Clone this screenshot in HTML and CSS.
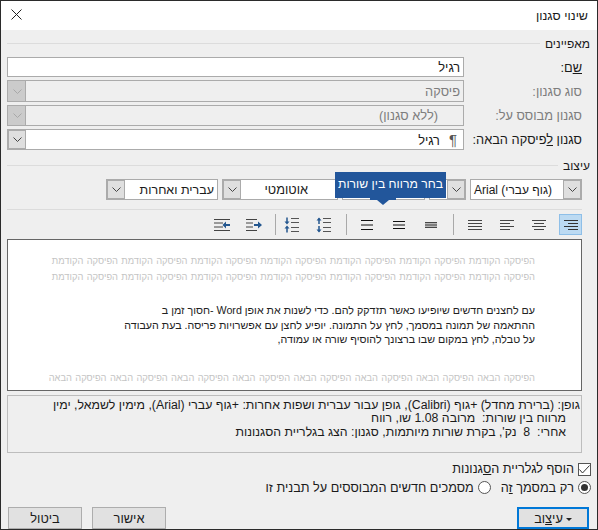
FILE: index.html
```html
<!DOCTYPE html>
<html lang="he" dir="rtl">
<head>
    <meta charset="UTF-8">
    <title>שינוי סגנון</title>
    <link rel="stylesheet" href="styles.css">
</head>
<body>

    <div class="dialog">
        <div class="titlebar">
            <span class="title">שינוי סגנון</span>
            <svg class="close" width="11" height="11" viewBox="0 0 11 11"><path d="M.5.5l10 10M10.500.5l-10 10" stroke="#222" stroke-width="1" fill="none"/></svg>
        </div>

        <div class="content">
            <!-- Properties -->
            <div class="legend legend-first"><span>מאפיינים</span><i></i></div>
            <div class="form-row row-name">
                <label><u>ש</u>ם:</label>
                <div class="field">רגיל</div>
            </div>
            <div class="form-row row-type">
                <label class="muted">סוג סגנון:</label>
                <div class="field disabled"><span class="field-text">פיסקה</span><span class="arrow"><svg width="9" height="5" viewBox="0 0 9 5"><path d="M.5.5l4 4 4-4" stroke="#a8a8a8" fill="none"/></svg></span></div>
            </div>
            <div class="form-row row-based">
                <label class="muted">סגנון מבוסס על:</label>
                <div class="field disabled"><span class="field-text based">(ללא סגנון)</span><span class="arrow"><svg width="9" height="5" viewBox="0 0 9 5"><path d="M.5.5l4 4 4-4" stroke="#a8a8a8" fill="none"/></svg></span></div>
            </div>
            <div class="form-row row-next">
                <label>סגנון <u>ל</u>פיסקה הבאה:</label>
                <div class="field combo"><span class="field-text"><span class="pilcrow">¶</span>רגיל</span><span class="arrow"><svg width="9" height="5" viewBox="0 0 9 5"><path d="M.5.5l4 4 4-4" stroke="#444" fill="none"/></svg></span></div>
            </div>

            <!-- Formatting -->
            <div class="legend legend-format"><span>עיצוב</span><i></i></div>
            <div class="font-row">
                <div class="select font-name"><span class="field-text" dir="ltr">Arial (גוף עברי)</span><span class="arrow"><svg width="9" height="5" viewBox="0 0 9 5"><path d="M.5.5l4 4 4-4" stroke="#444" fill="none"/></svg></span></div>
                <div class="select font-small"><span class="field-text"></span><span class="arrow"><svg width="9" height="5" viewBox="0 0 9 5"><path d="M.5.5l4 4 4-4" stroke="#444" fill="none"/></svg></span></div>
                <div class="select font-size"></div>
                <div class="select font-color"><span class="field-text">אוטומטי</span><span class="arrow"><svg width="9" height="5" viewBox="0 0 9 5"><path d="M.5.5l4 4 4-4" stroke="#444" fill="none"/></svg></span></div>
                <div class="select font-lang"><span class="field-text">עברית ואחרות</span><span class="arrow"><svg width="9" height="5" viewBox="0 0 9 5"><path d="M.5.5l4 4 4-4" stroke="#444" fill="none"/></svg></span></div>
                <div class="tooltip">בחר מרווח בין שורות</div>
            </div>

            <div class="toolbar">
                <span class="tool active"><svg width="14" height="10" viewBox="0 0 14 10"><path d="M0 .5h14M4 3.500h10M0 6.500h14M4 9.500h10" stroke="#333"/></svg></span>
                <span class="tool"><svg width="14" height="10" viewBox="0 0 14 10"><path d="M0 .5h14M2 3.500h10M0 6.500h14M2 9.500h10" stroke="#444"/></svg></span>
                <span class="tool"><svg width="14" height="10" viewBox="0 0 14 10"><path d="M0 .5h14M0 3.500h10M0 6.500h14M0 9.500h10" stroke="#444"/></svg></span>
                <span class="tool"><svg width="14" height="10" viewBox="0 0 14 10"><path d="M0 .5h14M0 3.500h14M0 6.500h14M0 9.500h14" stroke="#444"/></svg></span>
                <i class="sep"></i>
                <span class="tool"><svg width="12" height="6" viewBox="0 0 12 6"><path d="M0 .8h12M0 3h12M0 5.200h12" stroke="#111" stroke-width="1.100"/></svg></span>
                <span class="tool"><svg width="12" height="8" viewBox="0 0 12 8"><path d="M0 .5h12M0 4h12M0 7.500h12" stroke="#111"/></svg></span>
                <span class="tool"><svg width="12" height="10" viewBox="0 0 12 10"><path d="M0 .5h12M0 5h12M0 9.500h12" stroke="#111"/></svg></span>
                <i class="sep"></i>
                <span class="tool"><svg width="15" height="16" viewBox="0 0 15 16"><path d="M3 1.500v5.500M3 9v5.500" stroke="#24578f" stroke-width="1.500" fill="none"/><path d="M.5 3.500L3 .5l2.500 3zM.5 12.500L3 15.500l2.500-3z" fill="#24578f"/><path d="M7 1.500h8M7 5.500h8M7 10.500h8M7 14.500h8" stroke="#555"/></svg></span>
                <span class="tool"><svg width="15" height="16" viewBox="0 0 15 16"><path d="M3 .5v5M3 10.500v5" stroke="#24578f" stroke-width="1.500" fill="none"/><path d="M.5 4.500L3 7.500l2.500-3zM.5 11.500L3 8.500l2.500 3z" fill="#24578f"/><path d="M7 1.500h8M7 5.500h8M7 10.500h8M7 14.500h8" stroke="#555"/></svg></span>
                <i class="sep sep-tight"></i>
                <span class="tool"><svg width="16" height="12" viewBox="0 0 16 12"><path d="M0 .5h11M0 4h7M0 8h7M0 11.500h11" stroke="#444"/><path d="M8 5h4V2.500L16 6l-4 3.500V7H8z" fill="#24578f"/></svg></span>
                <span class="tool"><svg width="16" height="12" viewBox="0 0 16 12"><path d="M0 .5h16M0 4h9M0 8h9M0 11.500h16" stroke="#444"/><path d="M16 5h-4V2.500L8.500 6l3.500 3.500V7h4z" fill="#24578f"/></svg></span>
            </div>

            <!-- Preview -->
            <div class="preview">
                <p class="ghost ghost-first">הפיסקה הקודמת הפיסקה הקודמת הפיסקה הקודמת הפיסקה הקודמת הפיסקה הקודמת הפיסקה הקודמת הפיסקה הקודמת</p>
                <p class="ghost">הפיסקה הקודמת הפיסקה הקודמת הפיסקה הקודמת הפיסקה הקודמת הפיסקה הקודמת הפיסקה הקודמת הפיסקה הקודמת</p>
                <p class="sample sample-first">עם לחצנים חדשים שיופיעו כאשר תזדקק להם. כדי לשנות את אופן Word -חסוך זמן ב</p>
                <p class="sample">ההתאמה של תמונה במסמך, לחץ על התמונה. יופיע לחצן עם אפשרויות פריסה. בעת העבודה</p>
                <p class="sample">על טבלה, לחץ במקום שבו ברצונך להוסיף שורה או עמודה,</p>
                <p class="ghost ghost-next">הפיסקה הבאה הפיסקה הבאה הפיסקה הבאה הפיסקה הבאה הפיסקה הבאה הפיסקה הבאה הפיסקה הבאה הפיסקה הבאה</p>
            </div>

            <!-- Description -->
            <div class="description">
                <p>גופן: (ברירת מחדל) +גוף (Calibri), גופן עבור עברית ושפות אחרות: +גוף עברי (Arial), מימין לשמאל, ימין</p>
                <p class="indent">מרווח בין שורות:&nbsp; מרובה 1.08 שו, רווח</p>
                <p class="indent">אחרי:&nbsp; 8&nbsp; נק', בקרת שורות מיותמות, סגנון: הצג בגלריית הסגנונות</p>
            </div>

            <div class="check-row">
                <span class="checkbox"><svg width="11" height="9" viewBox="0 0 11 9"><path d="M.5 4.500l3 3.500L10.500.5" stroke="#333" fill="none"/></svg></span>
                <span>הוסף לגלריית ה<u>ס</u>גנונות</span>
            </div>
            <div class="radio-row">
                <span class="radio-item"><span class="radio checked"></span><span>רק במסמך <u>ז</u>ה</span></span>
                <span class="radio-item"><span class="radio"></span><span>מסמכים חדשים המבוססים על תבנית זו</span></span>
            </div>

            <div class="buttons">
                <button class="btn btn-format"><span class="caret"></span>עי<u>צ</u>וב</button>
                <div class="btn-group">
                    <button class="btn">אישור</button>
                    <button class="btn">ביטול</button>
                </div>
            </div>
        </div>
    </div>

</body>
</html>
```

FILE: styles.css
```css
* {
    box-sizing: border-box;
}

html, body {
    margin: 0;
    padding: 0;
}

body {
    font-family: "Liberation Sans", Arial, sans-serif;
    font-size: 12px;
    color: #1a1a1a;
    background: #efefef;
}

p {
    margin: 0;
}

.dialog {
    width: 598px;
    height: 530px;
    border: 1px solid #2b2b2b;
    background: #efefef;
    overflow: hidden;
}

.titlebar {
    height: 29px;
    background: #fff;
    display: flex;
    justify-content: space-between;
    align-items: center;
    padding: 0 9px 1px 10px;
}

.title {
    font-size: 12.500px;
    margin-top: 1px;
}

.close {
    margin-top: -2px;
}

.content {
    padding: 0 15px;
}

/* Section headers */
.legend {
    display: flex;
    align-items: center;
    gap: 5px;
    height: 14px;
    margin-right: -8px;
    margin-left: -9px;
    font-size: 12px;
}

.legend i {
    flex: 1;
    height: 1px;
    background: #dcdcdc;
    margin-top: -2px;
}

.legend-first {
    margin-top: 7px;
}

.legend-format {
    margin-top: 9px;
}

/* Form rows */
.form-row {
    display: flex;
    align-items: center;
    margin-left: -9px;
}

.form-row label {
    width: 118px;
    flex: none;
    font-size: 12.800px;
}

.form-row .field {
    flex: 1;
}

.muted {
    color: #7d7d7d;
}

.row-name {
    margin-top: 6px;
    height: 20px;
}

.row-type {
    margin-top: 3px;
    height: 22px;
}

.row-based, .row-next {
    margin-top: 3px;
    height: 21px;
}

.field, .select {
    height: 100%;
    border: 1px solid #ababab;
    background: #fff;
    display: flex;
    align-items: center;
    font-size: 12.800px;
}

.row-name .field {
    padding-right: 3px;
}

.field-text {
    flex: 1;
    padding-right: 3px;
    white-space: nowrap;
    overflow: hidden;
}

.based {
    padding-right: 25px;
}

.pilcrow {
    color: #555;
    font-size: 15px;
    margin-left: 9px;
    margin-right: 3px;
}

.disabled {
    background: #efefef;
    color: #7d7d7d;
}

.arrow {
    flex: none;
    width: 18px;
    height: 100%;
    background: #dfdfdf;
    box-shadow: inset 0 0 0 1px #ababab;
    display: flex;
    align-items: center;
    justify-content: center;
}

.disabled .arrow {
    background: #cbcbcb;
    box-shadow: inset -1px 0 0 #ababab;
}

/* Font selectors */
.font-row {
    position: relative;
    display: flex;
    gap: 4px;
    height: 21px;
    margin-top: 6px;
    margin-left: 90px;
}

.font-name {
    width: 112px;
    flex-direction: row-reverse;
}

.font-name .field-text {
    text-align: left;
    padding: 0 0 0 3px;
    font-size: 12px;
}

.font-small {
    width: 37px;
    flex-direction: row-reverse;
}

.font-size {
    width: 83px;
}

.font-color {
    width: 116px;
}

.font-color .field-text {
    padding-right: 29px;
}

.font-lang {
    width: 112px;
}

.font-lang .field-text {
    font-size: 12.500px;
}

.tooltip {
    position: absolute;
    top: -7px;
    right: 136px;
    width: 111px;
    height: 26px;
    background: #22569b;
    color: #fff;
    font-size: 12.200px;
    line-height: 25px;
    text-align: center;
    white-space: nowrap;
}

.tooltip::after {
    content: "";
    position: absolute;
    top: 26px;
    left: 35px;
    width: 26px;
    height: 2px;
    background: #22569b;
}

.tooltip::before {
    content: "";
    position: absolute;
    top: 28px;
    left: 42px;
    border-style: solid;
    border-width: 5px 6px 0 6px;
    border-color: #22569b transparent transparent transparent;
}

/* Alignment toolbar */
.toolbar {
    display: flex;
    align-items: center;
    height: 26px;
    margin-top: 9px;
    margin-left: -9px;
    border-top: 1px solid #dcdcdc;
    padding-top: 4px;
    gap: 9px;
}

.tool {
    width: 23px;
    height: 21px;
    flex: none;
    display: flex;
    align-items: center;
    justify-content: center;
}

.tool.active {
    background: #bcdaf2;
    border: 1px solid #8ebfe8;
}

.sep {
    width: 1px;
    height: 21px;
    flex: none;
    background: #a9a9a9;
    margin-left: 1.500px;
}

.sep-tight {
    margin-right: -5px;
    margin-left: 1px;
}

/* Preview */
.preview {
    height: 152px;
    margin-top: 4px;
    margin-left: -9px;
    border: 1px solid #666;
    background: #fff;
    padding: 0 46px;
    overflow: hidden;
}

.ghost {
    color: #c4c4c4;
    white-space: nowrap;
    line-height: 16px;
    font-size: 9.300px;
    word-spacing: .8px;
}

.ghost-first {
    margin-top: 13px;
}

.sample {
    line-height: 14.500px;
    color: #222;
    white-space: nowrap;
    font-size: 10.700px;
}

.sample-first {
    margin-top: 18px;
}

.ghost-next {
    margin-top: 23px;
}

/* Description */
.description {
    height: 58px;
    margin-top: 4px;
    margin-left: -9px;
    border: 1px solid #bdbdbd;
    padding: 3px 1px 0 0;
    font-size: 12.300px;
    line-height: 13.400px;
    white-space: nowrap;
}

.description .indent {
    padding-right: 14px;
}

/* Options */
.check-row, .radio-row {
    display: flex;
    align-items: center;
    gap: 4px;
    font-size: 12.700px;
    margin-right: -9px;
}

.check-row {
    margin-top: 8px;
    height: 16px;
}

.checkbox {
    width: 13px;
    height: 13px;
    border: 1px solid #555;
    background: #fff;
    display: flex;
    align-items: center;
    justify-content: center;
}

.radio-row {
    margin-top: 2px;
    height: 17px;
    gap: 10px;
}

.radio-item {
    display: flex;
    align-items: center;
    gap: 4px;
}

.radio {
    width: 13px;
    height: 13px;
    border: 1px solid #555;
    border-radius: 50%;
    background: #fff;
    position: relative;
}

.radio.checked::after {
    content: "";
    position: absolute;
    top: 2px;
    left: 2px;
    width: 7px;
    height: 7px;
    border-radius: 50%;
    background: #333;
}

/* Buttons */
.buttons {
    display: flex;
    justify-content: space-between;
    margin-top: 11px;
    margin-left: -8px;
    margin-right: -7px;
}

.btn-group {
    display: flex;
    gap: 10px;
}

.btn {
    width: 74px;
    height: 22px;
    border: 1px solid #adadad;
    background: #e1e1e1;
    font-family: inherit;
    font-size: 12.800px;
    color: #1a1a1a;
    padding: 0;
}

.btn-format {
    width: 72px;
    border: 2px solid #0078d7;
}

.caret {
    display: inline-block;
    border-style: solid;
    border-width: 3px 3px 0 3px;
    border-color: #222 transparent transparent transparent;
    vertical-align: middle;
    margin-left: 3px;
}
```
